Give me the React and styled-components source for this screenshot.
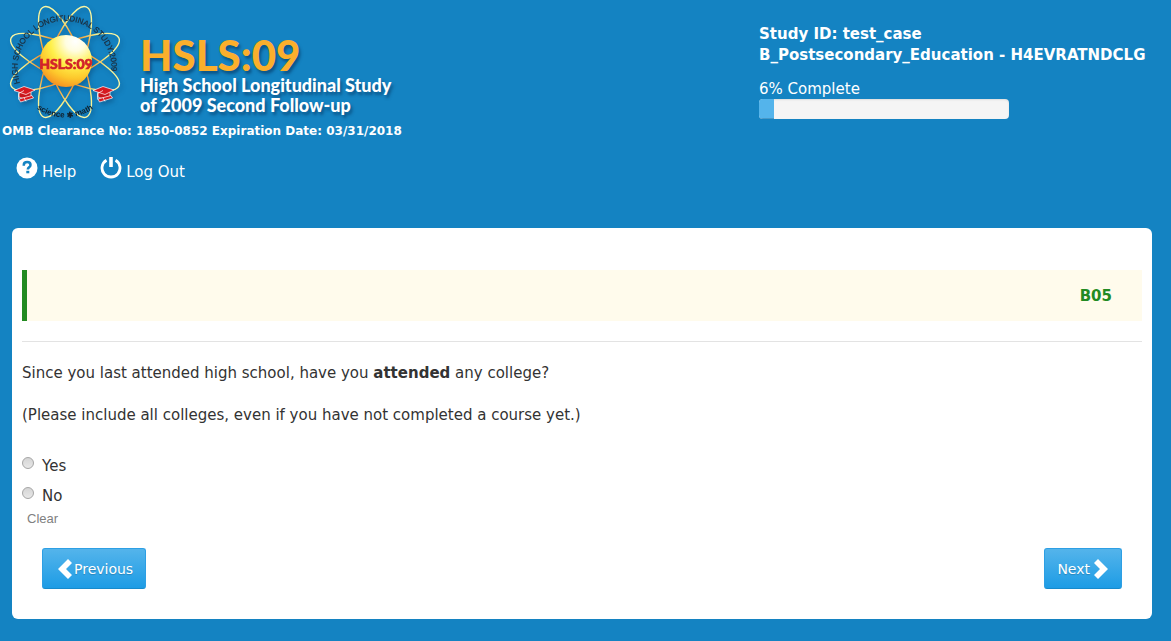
import { useState } from "react";
import styled, { createGlobalStyle } from "styled-components";

const GlobalStyle = createGlobalStyle`
  * {
    box-sizing: border-box;
  }

  body {
    margin: 0;
    background-color: #1483c2;
    color: #333;
    font-family: Verdana, "DejaVu Sans", sans-serif;
    font-size: 15px;
    line-height: 21px;
  }
`;

const Cap = ({ x }) => (
  <g transform={`translate(${x} 86)`} stroke="#fff" strokeWidth="0.7" strokeLinejoin="round">
    <path d="M5 6v5c4 2 8 2 12 0V5z" fill="#c8161d" />
    <path d="M0 4.500 10 .5l11 3.500-9 4.500z" fill="#d71920" />
    <path d="M10 4.500 4.500 7.500v6" fill="none" />
    <path d="m5 13 13-3.500 1.500 2.500-13 4z" fill="#d71920" />
    <path d="m10 11.500 2 4" fill="none" />
  </g>
);

const AtomLogo = () => (
  <Atom viewBox="0 0 130 124" role="img" aria-label="High School Longitudinal Study:2009">
    <defs>
      <radialGradient id="sun" cx="0.68" cy="0.12" r="0.95">
        <stop offset="0" stopColor="#fff" />
        <stop offset="0.2" stopColor="#fffde0" />
        <stop offset="0.5" stopColor="#fff04a" />
        <stop offset="0.75" stopColor="#fdc82c" />
        <stop offset="1" stopColor="#f58a1f" />
      </radialGradient>
      <radialGradient id="orbit" gradientUnits="userSpaceOnUse" cx="65" cy="62" r="60">
        <stop offset="0.45" stopColor="#f39a35" />
        <stop offset="0.7" stopColor="#f7f08a" />
        <stop offset="1" stopColor="#fbf7a5" />
      </radialGradient>
      <path id="topArc" d="M20 83A47 47 0 1 1 106 90" />
      <path id="bottomArc" d="M31 105Q65 130 99 105" />
    </defs>
    <g fill="none" stroke="url(#orbit)" strokeWidth="1.400">
      {[24, 69, 111, 156].map((angle) => (
        <ellipse key={angle} cx="65" cy="62" rx="59" ry="17" transform={`rotate(${angle} 65 62)`} />
      ))}
    </g>
    <circle cx="66" cy="61" r="26" fill="url(#sun)" />
    <text fontFamily='"Liberation Sans", sans-serif' fontSize="8" fill="#1c2c3a" stroke="#1c2c3a" strokeWidth="0.2">
      <textPath href="#topArc">HIGH SCHOOL LONGITUDINAL STUDY:2009</textPath>
    </text>
    <text x="66" y="69" textAnchor="middle" fontFamily="Lato, sans-serif" fontSize="14" fontWeight="900" fill="#d2232a" stroke="#d2232a" strokeWidth="0.7">
      HSLS:09
    </text>
    <text fontFamily='"Liberation Sans", sans-serif' fontSize="8" fontWeight="700" fill="#10202c" textAnchor="middle">
      <textPath href="#bottomArc" startOffset="50%">science ✱ math</textPath>
    </text>
    <Cap x={14} />
    <Cap x={93} />
  </Atom>
);

const HelpIcon = () => (
  <Icon viewBox="0 0 22 22" aria-hidden="true">
    <circle cx="11" cy="11" r="10.500" fill="#fff" />
    <path d="M7.800 8.700V8c0-2 1.400-2.900 3.400-2.900s3.300 1 3.300 2.800c0 2.400-2.700 2.300-2.700 4.500" fill="none" stroke="#1483c2" strokeWidth="2.500" />
    <path d="M10.300 13.800h3v2.500h-3z" fill="#1483c2" />
  </Icon>
);

const PowerIcon = () => (
  <Icon viewBox="0 0 22 22" aria-hidden="true" fill="none" stroke="#fff">
    <path d="M6.500 3.200a9 9 0 1 0 9 0" strokeWidth="2.800" />
    <path d="M11 0v10" strokeWidth="3.600" />
  </Icon>
);

const Chevron = ({ right }) => (
  <Arrow viewBox="0 0 15 20" aria-hidden="true">
    <path d={right ? "M0 4 4 0l10 10L4 20l-4-4 6-6z" : "M15 4 11 0 1 10l10 10 4-4-6-6z"} fill="#fff" />
  </Arrow>
);

const App = () => {
  const [answer, setAnswer] = useState("");
  const percent = 6;

  return (
    <>
      <GlobalStyle />
      <Header>
        <div>
          <Brand>
            <AtomLogo />
            <BrandText>
              <BrandName>HSLS:09</BrandName>
              <BrandTitle>
                High School Longitudinal Study
                <br />
                of 2009 Second Follow-up
              </BrandTitle>
            </BrandText>
          </Brand>
          <Clearance>OMB Clearance No: 1850-0852 Expiration Date: 03/31/2018</Clearance>
          <Nav>
            <NavLink href="#help">
              <HelpIcon />
              Help
            </NavLink>
            <NavLink href="#logout">
              <PowerIcon />
              Log Out
            </NavLink>
          </Nav>
        </div>
        <Status>
          <StudyId>
            Study ID: test_case
            <br />
            B_Postsecondary_Education - H4EVRATNDCLG
          </StudyId>
          <ProgressLabel id="progress-label">{percent}% Complete</ProgressLabel>
          <Progress role="progressbar" aria-labelledby="progress-label" aria-valuenow={percent}>
            <ProgressBar style={{ width: `${percent}%` }} />
          </Progress>
        </Status>
      </Header>

      <Panel>
        <Banner>B05</Banner>
        <Divider />
        <Question id="question">
          Since you last attended high school, have you <b>attended</b> any college?
        </Question>
        <Question>(Please include all colleges, even if you have not completed a course yet.)</Question>
        <Options role="radiogroup" aria-labelledby="question">
          {["Yes", "No"].map((option) => (
            <Option key={option}>
              <Radio
                type="radio"
                name="B05"
                value={option}
                checked={answer === option}
                onChange={() => setAnswer(option)}
              />
              {option}
            </Option>
          ))}
        </Options>
        <ClearButton type="button" onClick={() => setAnswer("")}>
          Clear
        </ClearButton>
        <Actions>
          <Button type="button">
            <Chevron />
            Previous
          </Button>
          <Button type="button" $next>
            Next
            <Chevron right />
          </Button>
        </Actions>
      </Panel>
    </>
  );
};

const Header = styled.header`
  display: grid;
  grid-template-columns: 1fr 412px;
  color: #fff;
`;

const Brand = styled.div`
  display: flex;
  height: 121px;
`;

const Atom = styled.svg`
  width: 130px;
  height: 124px;
  flex: none;
  filter: drop-shadow(2px 3px 2px rgba(0, 40, 80, 0.3));
`;

const BrandText = styled.div`
  padding: 35px 0 0 10px;
  font-family: Lato, sans-serif;
  font-weight: 900;
  white-space: nowrap;
  text-shadow: 2px 3px 3px rgba(0, 40, 80, 0.5);
`;

const BrandName = styled.div`
  color: #fbaf2c;
  font-size: 42px;
  line-height: 40px;
`;

const BrandTitle = styled.div`
  font-size: 18px;
  line-height: 20px;
`;

const Clearance = styled.div`
  padding-left: 2px;
  font-size: 12px;
  font-weight: 700;
`;

const Nav = styled.nav`
  display: flex;
  gap: 24px;
  padding: 15px 0 0 16px;
`;

const NavLink = styled.a`
  display: flex;
  align-items: flex-end;
  gap: 4px;
  height: 26px;
  color: #fff;
  text-decoration: none;
`;

const Icon = styled.svg`
  width: 22px;
  height: 22px;
  align-self: flex-start;
`;

const Status = styled.div`
  padding-top: 24px;
`;

const StudyId = styled.div`
  margin-bottom: 13px;
  font-weight: 700;
  white-space: nowrap;
`;

const ProgressLabel = styled.div`
  line-height: 20px;
`;

const Progress = styled.div`
  width: 250px;
  height: 20px;
  overflow: hidden;
  border-radius: 4px;
  background-color: #f5f5f5;
  box-shadow: inset 0 1px 2px rgba(0, 0, 0, 0.1);
`;

const ProgressBar = styled.div`
  height: 100%;
  background-color: #54b4eb;
  box-shadow: inset 0 -1px 0 rgba(0, 0, 0, 0.15);
`;

const Panel = styled.main`
  margin: 45px 19px 22px 12px;
  padding: 42px 10px 30px;
  border-radius: 6px;
  background-color: #fff;
`;

const Banner = styled.div`
  padding: 16px 30px 14px;
  border-left: 5px solid #228b22;
  background-color: #fffbec;
  color: #228b22;
  font-weight: 700;
  text-align: right;
`;

const Divider = styled.hr`
  margin: 20px 0 21px;
  border: 0;
  border-top: 1px solid #e3e3e3;
`;

const Question = styled.p`
  margin: 0 0 21px;
`;

const Options = styled.div`
  padding-top: 9px;
`;

const Option = styled.label`
  display: flex;
  width: max-content;
  gap: 8px;

  & + & {
    margin-top: 9px;
  }
`;

const Radio = styled.input`
  appearance: none;
  width: 12px;
  height: 12px;
  margin: 1px 0 0;
  border: 1px solid #a5a5a5;
  border-radius: 50%;
  background: linear-gradient(#d5d5d5, #e8e8e8);

  &:checked {
    background: radial-gradient(#555 0 3px, #e2e2e2 4px);
  }
`;

const ClearButton = styled.button`
  display: block;
  margin-top: 4px;
  padding: 0 5px;
  border: 0;
  background: none;
  color: #808080;
  font-family: "Liberation Sans", Arial, sans-serif;
  font-size: 13px;
  line-height: 15px;
`;

const Actions = styled.div`
  display: flex;
  justify-content: space-between;
  padding: 22px 20px 0;
`;

const Button = styled.button`
  display: flex;
  align-items: center;
  gap: ${({ $next }) => ($next ? 4 : 2)}px;
  height: 41px;
  padding: ${({ $next }) => ($next ? "1px 12px 0" : "1px 12px 0 14px")};
  border: 1px solid #2d9fe4;
  border-bottom-color: #178acc;
  border-radius: 3px;
  background-image: linear-gradient(#54b4eb, #1d9ce5);
  color: #fff;
  font-family: inherit;
  font-size: 14px;
  text-shadow: 0 1px 1px rgba(0, 0, 0, 0.2);
  cursor: pointer;
`;

const Arrow = styled.svg`
  width: 15px;
  height: 20px;
`;

export default App;
